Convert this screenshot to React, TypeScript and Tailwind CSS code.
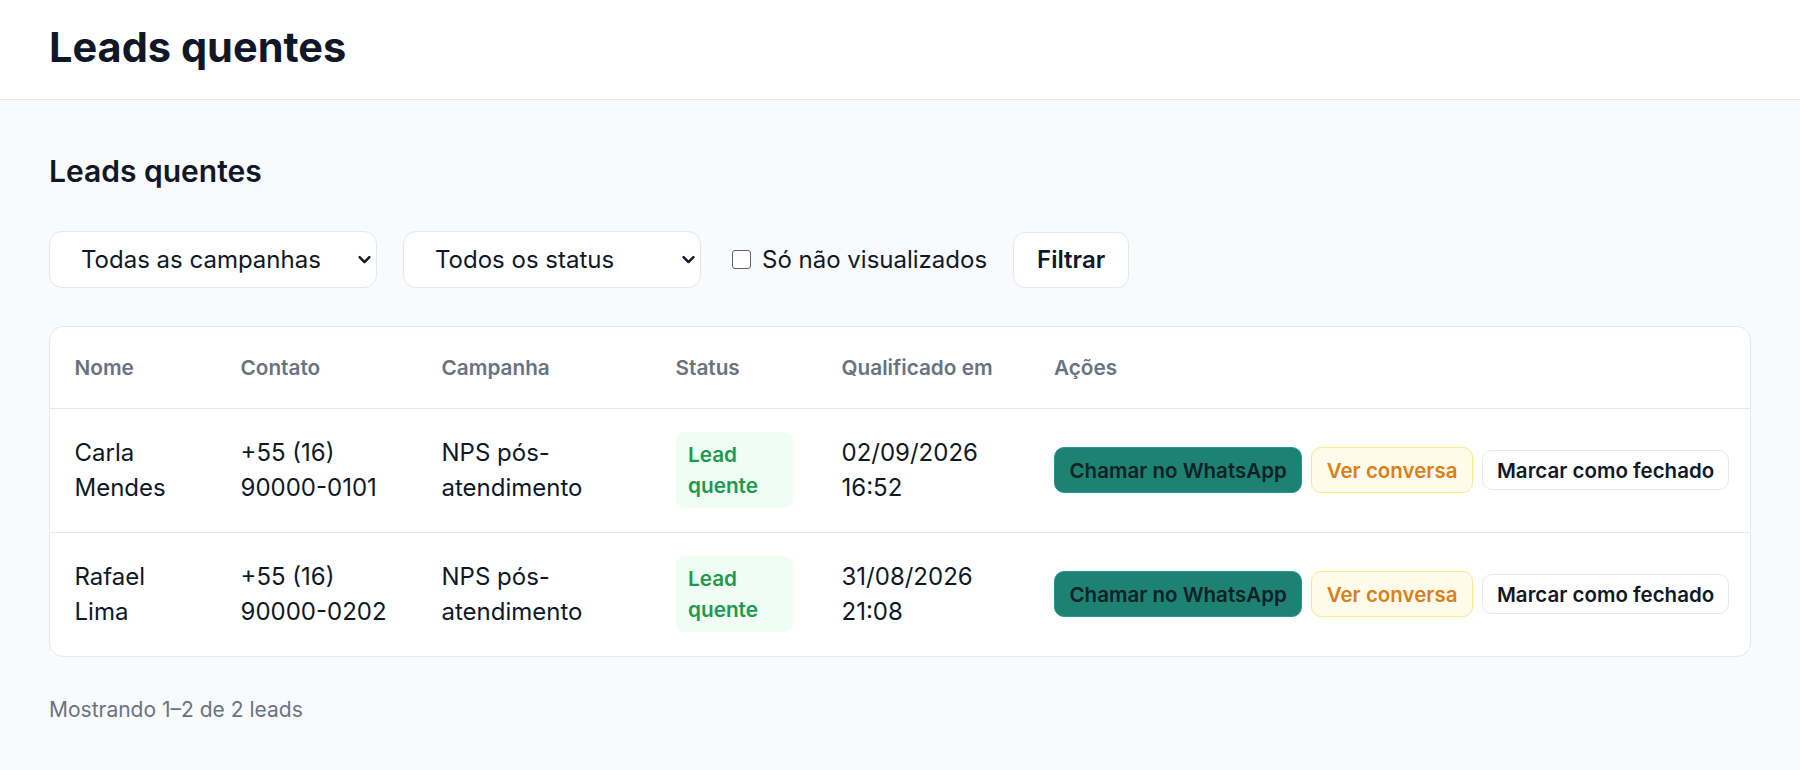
import { useState } from "react";

type Lead = {
  nome: string;
  contato: string;
  campanha: string;
  qualificado: string;
};

const leads: Lead[] = [
  {
    nome: "Carla Mendes",
    contato: "+55 (16) 90000-0101",
    campanha: "NPS pós-atendimento",
    qualificado: "02/09/2026 16:52",
  },
  {
    nome: "Rafael Lima",
    contato: "+55 (16) 90000-0202",
    campanha: "NPS pós-atendimento",
    qualificado: "31/08/2026 21:08",
  },
];

function Chevron() {
  return (
    <svg
      viewBox="0 0 13 9"
      className="pointer-events-none absolute right-[6px] top-1/2 h-[9px] w-[13px] -translate-y-1/2 text-gray-900"
      fill="none"
      stroke="currentColor"
      strokeWidth={2.4}
      strokeLinecap="round"
      strokeLinejoin="round"
      aria-hidden
    >
      <path d="M1.6 1.6 6.5 6.6 11.4 1.6" />
    </svg>
  );
}

function FilterSelect({ width, options }: { width: string; options: string[] }) {
  return (
    <div className={`relative h-[57px] ${width}`}>
      <select className="h-full w-full appearance-none rounded-[13px] border border-gray-200 bg-white pl-[31px] pr-8 text-[24px] text-gray-900 outline-none">
        {options.map((o) => (
          <option key={o}>{o}</option>
        ))}
      </select>
      <Chevron />
    </div>
  );
}

export default function App() {
  const [onlyUnseen, setOnlyUnseen] = useState(false);

  return (
    <div className="min-h-screen bg-[#f9fafb] font-['Inter','Noto_Sans',sans-serif] text-gray-900">
      <header className="flex h-[100px] items-center border-b border-gray-200 bg-white px-[49px] pb-[3px]">
        <h1 className="text-[41.5px] font-bold leading-none">Leads quentes</h1>
      </header>

      <main className="px-[49px] pt-[49px]">
        <h2 className="text-[30px] font-semibold leading-[44px]">Leads quentes</h2>

        <div className="mt-[38px] flex h-[57px] items-center gap-[26px]">
          <FilterSelect
            width="w-[328px]"
            options={["Todas as campanhas", "NPS pós-atendimento", "Reativação de clientes inativos"]}
          />
          <FilterSelect
            width="w-[298px]"
            options={["Todos os status", "Lead quente", "Fechado", "Visualizado"]}
          />
          <label className="ml-[5px] flex items-center gap-[11px] text-[24px]">
            <input
              type="checkbox"
              checked={onlyUnseen}
              onChange={(e) => setOnlyUnseen(e.target.checked)}
              className="h-[19px] w-[19px] appearance-none rounded-[3px] border-[1.5px] border-[#5f6368] bg-white"
            />
            Só não visualizados
          </label>
          <button className="h-[56px] rounded-[12px] border border-gray-200 bg-white px-[23px] text-[24px] font-semibold">
            Filtrar
          </button>
        </div>

        <div className="mt-[38px] overflow-hidden rounded-[14px] border border-gray-200 bg-white">
          <table className="w-full table-fixed border-collapse text-left">
            <colgroup>
              <col className="w-[166px]" />
              <col className="w-[201px]" />
              <col className="w-[234px]" />
              <col className="w-[166px]" />
              <col className="w-[212.5px]" />
              <col />
            </colgroup>
            <thead>
              <tr className="h-[81px] border-b border-gray-200">
                {["Nome", "Contato", "Campanha", "Status", "Qualificado em", "Ações"].map((h) => (
                  <th
                    key={h}
                    className="px-[24.5px] align-middle text-[20.75px] font-semibold leading-[31px] text-gray-500"
                  >
                    {h}
                  </th>
                ))}
              </tr>
            </thead>
            <tbody>
              {leads.map((lead) => (
                <tr key={lead.nome} className="h-[124px] border-b border-gray-200 last:border-b-0">
                  <Cell>{lead.nome}</Cell>
                  <Cell>{lead.contato}</Cell>
                  <Cell>{lead.campanha}</Cell>
                  <Cell>
                    <span className="inline-block rounded-[9px] bg-[#f0fdf4] px-[12.5px] py-[6.5px] text-[20.75px] font-semibold leading-[31.5px] text-[#1c9a4f]">
                      Lead quente
                    </span>
                  </Cell>
                  <Cell>{lead.qualificado}</Cell>
                  <Cell>
                    <div className="flex items-center gap-[9px] whitespace-nowrap text-[20.5px] font-semibold">
                      <button className="h-[46px] rounded-[10px] border border-[#2795a0] bg-[#1e8272] px-[14.5px] text-[#0f2027]">
                        Chamar no WhatsApp
                      </button>
                      <button className="h-[46px] rounded-[10px] border border-[#fde68a] bg-[#fffbeb] px-[14.5px] text-[#d97f1a]">
                        Ver conversa
                      </button>
                      <button className="h-[40px] rounded-[10px] border border-gray-200 bg-white px-[14px] text-gray-900">
                        Marcar como fechado
                      </button>
                    </div>
                  </Cell>
                </tr>
              ))}
            </tbody>
          </table>
        </div>

        <p className="mt-[37px] text-[21px] leading-[31.5px] text-gray-500">Mostrando 1–2 de 2 leads</p>
      </main>
    </div>
  );
}

function Cell({ children }: { children: React.ReactNode }) {
  return <td className="px-[24.5px] align-middle text-[24px] leading-[35px]">{children}</td>;
}
